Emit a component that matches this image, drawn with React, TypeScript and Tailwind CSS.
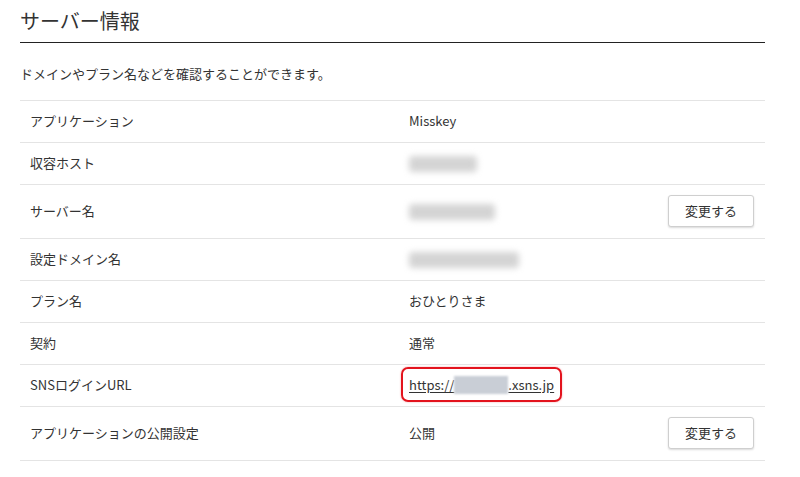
import React from 'react';

type Row = {
  label: string;
  value: React.ReactNode;
  action?: boolean;
};

function Blur({ w }: { w: number }) {
  return (
    <span
      className="inline-block h-[16px] rounded-[4px] bg-[#d4d4d4] blur-[3px] align-middle"
      style={{ width: w }}
    />
  );
}

function ChangeButton() {
  return (
    <button className="h-[32px] w-[86px] rounded-[3px] border border-[#cfcfcf] bg-white text-[13px] text-[#333] shadow-[0_1px_2px_rgba(0,0,0,0.15)]">
      変更する
    </button>
  );
}

const rows: Row[] = [
  { label: 'アプリケーション', value: 'Misskey' },
  { label: '収容ホスト', value: <Blur w={68} /> },
  { label: 'サーバー名', value: <Blur w={86} />, action: true },
  { label: '設定ドメイン名', value: <Blur w={110} /> },
  { label: 'プラン名', value: 'おひとりさま' },
  { label: '契約', value: '通常' },
  {
    label: 'SNSログインURL',
    value: (
      <span className="-ml-[8px] inline-flex h-[35px] items-center rounded-[7px] border-2 border-[#e3131d] px-[6px] shadow-[0_0_2px_rgba(227,19,29,0.4)]">
        <a href="#" className="flex items-center text-[#333] underline underline-offset-2">
          https://
          <span className="inline-block h-[18px] w-[54px] bg-[#c9ced6] blur-[1px]" />
          .xsns.jp
        </a>
      </span>
    ),
  },
  { label: 'アプリケーションの公開設定', value: '公開', action: true },
];

export default function App() {
  return (
    <div
      className="min-h-[477px] w-[800px] bg-white px-[20px] text-[#333]"
      style={{ fontFamily: '"Noto Sans CJK JP", "Noto Sans", sans-serif' }}
    >
      <div className="w-[745px]">
        <h1 className="border-b border-[#222] pb-[7px] pt-[6px] text-[20px] font-normal leading-[29px] text-[#333]">
          サーバー情報
        </h1>
        <p className="pb-[17px] pt-[22px] text-[13px] leading-[18px] text-[#333]">
          ドメインやプラン名などを確認することができます。
        </p>
        <div className="border-t border-[#e4e4e4]">
          {rows.map((r) => (
            <div
              key={r.label}
              className={`flex items-center border-b border-[#e4e4e4] pb-[2px] text-[13px] ${r.action ? 'h-[54px]' : 'h-[42px]'}`}
            >
              <div className="w-[379px] pl-[10px]">{r.label}</div>
              <div className="flex-1 pl-[10px]">{r.value}</div>
              {r.action && (
                <div className="pr-[11px]">
                  <ChangeButton />
                </div>
              )}
            </div>
          ))}
        </div>
      </div>
    </div>
  );
}
